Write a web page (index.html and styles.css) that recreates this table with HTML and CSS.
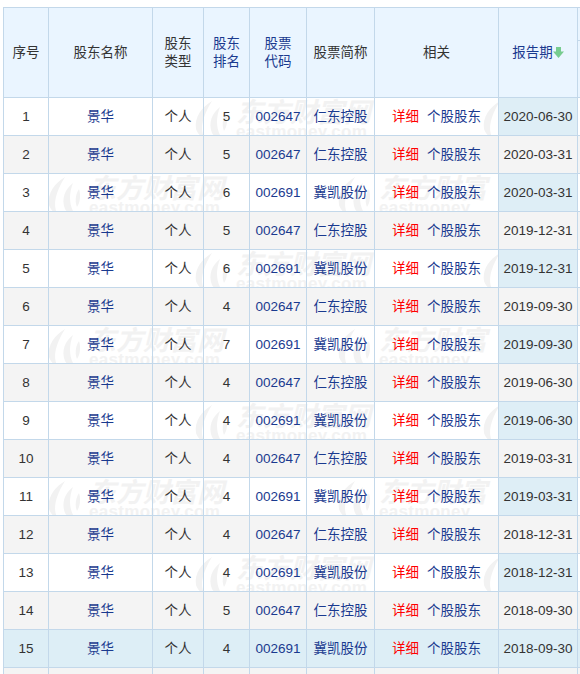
FILE: index.html
```html
<!DOCTYPE html>
<html lang="zh-CN">
<head>
<meta charset="utf-8">
<title>股东持股</title>
<link rel="stylesheet" href="styles.css">
</head>
<body>
<div class="page">
  <div class="wm-layer">
    <div class="wm" style="left:190px;top:99px"><svg class="wm-icon" viewBox="0 0 40 40"><path d="M22 2 C12 8 4 18 6 30 C8 36 12 38 14 38 C10 30 12 18 22 2 Z"/><path d="M30 8 C22 14 18 24 22 34 C24 38 28 38 30 36 C26 28 26 18 30 8 Z"/><path d="M36 14 C32 20 32 28 34 32 C37 28 38 20 36 14 Z"/></svg><div class="wm-text"><span class="wm-cn">东方财富网</span><span class="wm-en">eastmoney.com</span></div></div>
    <div class="wm" style="left:478px;top:99px"><svg class="wm-icon" viewBox="0 0 40 40"><path d="M22 2 C12 8 4 18 6 30 C8 36 12 38 14 38 C10 30 12 18 22 2 Z"/><path d="M30 8 C22 14 18 24 22 34 C24 38 28 38 30 36 C26 28 26 18 30 8 Z"/><path d="M36 14 C32 20 32 28 34 32 C37 28 38 20 36 14 Z"/></svg></div>
    <div class="wm" style="left:43px;top:175px"><svg class="wm-icon" viewBox="0 0 40 40"><path d="M22 2 C12 8 4 18 6 30 C8 36 12 38 14 38 C10 30 12 18 22 2 Z"/><path d="M30 8 C22 14 18 24 22 34 C24 38 28 38 30 36 C26 28 26 18 30 8 Z"/><path d="M36 14 C32 20 32 28 34 32 C37 28 38 20 36 14 Z"/></svg><div class="wm-text"><span class="wm-cn">东方财富网</span><span class="wm-en">eastmoney.com</span></div></div>
    <div class="wm" style="left:333px;top:175px"><svg class="wm-icon" viewBox="0 0 40 40"><path d="M22 2 C12 8 4 18 6 30 C8 36 12 38 14 38 C10 30 12 18 22 2 Z"/><path d="M30 8 C22 14 18 24 22 34 C24 38 28 38 30 36 C26 28 26 18 30 8 Z"/><path d="M36 14 C32 20 32 28 34 32 C37 28 38 20 36 14 Z"/></svg><div class="wm-text"><span class="wm-cn">东方财富</span><span class="wm-en">eastmoney</span></div></div>
    <div class="wm" style="left:190px;top:251px"><svg class="wm-icon" viewBox="0 0 40 40"><path d="M22 2 C12 8 4 18 6 30 C8 36 12 38 14 38 C10 30 12 18 22 2 Z"/><path d="M30 8 C22 14 18 24 22 34 C24 38 28 38 30 36 C26 28 26 18 30 8 Z"/><path d="M36 14 C32 20 32 28 34 32 C37 28 38 20 36 14 Z"/></svg><div class="wm-text"><span class="wm-cn">东方财富网</span><span class="wm-en">eastmoney.com</span></div></div>
    <div class="wm" style="left:478px;top:251px"><svg class="wm-icon" viewBox="0 0 40 40"><path d="M22 2 C12 8 4 18 6 30 C8 36 12 38 14 38 C10 30 12 18 22 2 Z"/><path d="M30 8 C22 14 18 24 22 34 C24 38 28 38 30 36 C26 28 26 18 30 8 Z"/><path d="M36 14 C32 20 32 28 34 32 C37 28 38 20 36 14 Z"/></svg></div>
    <div class="wm" style="left:43px;top:327px"><svg class="wm-icon" viewBox="0 0 40 40"><path d="M22 2 C12 8 4 18 6 30 C8 36 12 38 14 38 C10 30 12 18 22 2 Z"/><path d="M30 8 C22 14 18 24 22 34 C24 38 28 38 30 36 C26 28 26 18 30 8 Z"/><path d="M36 14 C32 20 32 28 34 32 C37 28 38 20 36 14 Z"/></svg><div class="wm-text"><span class="wm-cn">东方财富网</span><span class="wm-en">eastmoney.com</span></div></div>
    <div class="wm" style="left:333px;top:327px"><svg class="wm-icon" viewBox="0 0 40 40"><path d="M22 2 C12 8 4 18 6 30 C8 36 12 38 14 38 C10 30 12 18 22 2 Z"/><path d="M30 8 C22 14 18 24 22 34 C24 38 28 38 30 36 C26 28 26 18 30 8 Z"/><path d="M36 14 C32 20 32 28 34 32 C37 28 38 20 36 14 Z"/></svg><div class="wm-text"><span class="wm-cn">东方财富</span><span class="wm-en">eastmoney</span></div></div>
    <div class="wm" style="left:190px;top:403px"><svg class="wm-icon" viewBox="0 0 40 40"><path d="M22 2 C12 8 4 18 6 30 C8 36 12 38 14 38 C10 30 12 18 22 2 Z"/><path d="M30 8 C22 14 18 24 22 34 C24 38 28 38 30 36 C26 28 26 18 30 8 Z"/><path d="M36 14 C32 20 32 28 34 32 C37 28 38 20 36 14 Z"/></svg><div class="wm-text"><span class="wm-cn">东方财富网</span><span class="wm-en">eastmoney.com</span></div></div>
    <div class="wm" style="left:478px;top:403px"><svg class="wm-icon" viewBox="0 0 40 40"><path d="M22 2 C12 8 4 18 6 30 C8 36 12 38 14 38 C10 30 12 18 22 2 Z"/><path d="M30 8 C22 14 18 24 22 34 C24 38 28 38 30 36 C26 28 26 18 30 8 Z"/><path d="M36 14 C32 20 32 28 34 32 C37 28 38 20 36 14 Z"/></svg></div>
    <div class="wm" style="left:43px;top:479px"><svg class="wm-icon" viewBox="0 0 40 40"><path d="M22 2 C12 8 4 18 6 30 C8 36 12 38 14 38 C10 30 12 18 22 2 Z"/><path d="M30 8 C22 14 18 24 22 34 C24 38 28 38 30 36 C26 28 26 18 30 8 Z"/><path d="M36 14 C32 20 32 28 34 32 C37 28 38 20 36 14 Z"/></svg><div class="wm-text"><span class="wm-cn">东方财富网</span><span class="wm-en">eastmoney.com</span></div></div>
    <div class="wm" style="left:333px;top:479px"><svg class="wm-icon" viewBox="0 0 40 40"><path d="M22 2 C12 8 4 18 6 30 C8 36 12 38 14 38 C10 30 12 18 22 2 Z"/><path d="M30 8 C22 14 18 24 22 34 C24 38 28 38 30 36 C26 28 26 18 30 8 Z"/><path d="M36 14 C32 20 32 28 34 32 C37 28 38 20 36 14 Z"/></svg><div class="wm-text"><span class="wm-cn">东方财富</span><span class="wm-en">eastmoney</span></div></div>
    <div class="wm" style="left:190px;top:555px"><svg class="wm-icon" viewBox="0 0 40 40"><path d="M22 2 C12 8 4 18 6 30 C8 36 12 38 14 38 C10 30 12 18 22 2 Z"/><path d="M30 8 C22 14 18 24 22 34 C24 38 28 38 30 36 C26 28 26 18 30 8 Z"/><path d="M36 14 C32 20 32 28 34 32 C37 28 38 20 36 14 Z"/></svg><div class="wm-text"><span class="wm-cn">东方财富网</span><span class="wm-en">eastmoney.com</span></div></div>
    <div class="wm" style="left:478px;top:555px"><svg class="wm-icon" viewBox="0 0 40 40"><path d="M22 2 C12 8 4 18 6 30 C8 36 12 38 14 38 C10 30 12 18 22 2 Z"/><path d="M30 8 C22 14 18 24 22 34 C24 38 28 38 30 36 C26 28 26 18 30 8 Z"/><path d="M36 14 C32 20 32 28 34 32 C37 28 38 20 36 14 Z"/></svg></div>
  </div>

  <table class="grid">
    <colgroup>
      <col class="c-no"><col class="c-name"><col class="c-type"><col class="c-rank"><col class="c-code"><col class="c-abbr"><col class="c-rel"><col class="c-date"><col class="c-x"><col class="c-x">
    </colgroup>
    <thead>
      <tr class="h1">
        <th rowspan="2">序号</th>
        <th rowspan="2">股东名称</th>
        <th rowspan="2">股东<br>类型</th>
        <th rowspan="2" class="sortable">股东<br>排名</th>
        <th rowspan="2" class="sortable">股票<br>代码</th>
        <th rowspan="2">股票简称</th>
        <th rowspan="2">相关</th>
        <th rowspan="2" class="sortable sorted">报告期<svg class="sort-arrow" viewBox="0 0 11 11"><rect x="3" y="0" width="5" height="5"/><path d="M0 4.5 H11 L5.5 11 Z"/></svg></th>
        <th colspan="2"></th>
      </tr>
      <tr class="h2">
        <th></th><th></th>
      </tr>
    </thead>
    <tbody>
      <tr><td>1</td><td class="link">景华</td><td>个人</td><td>5</td><td class="link">002647</td><td class="link">仁东控股</td><td><span class="red">详细</span><span class="link">个股股东</span></td><td class="date">2020-06-30</td><td></td><td></td></tr>
      <tr><td>2</td><td class="link">景华</td><td>个人</td><td>5</td><td class="link">002647</td><td class="link">仁东控股</td><td><span class="red">详细</span><span class="link">个股股东</span></td><td class="date">2020-03-31</td><td></td><td></td></tr>
      <tr><td>3</td><td class="link">景华</td><td>个人</td><td>6</td><td class="link">002691</td><td class="link">冀凯股份</td><td><span class="red">详细</span><span class="link">个股股东</span></td><td class="date">2020-03-31</td><td></td><td></td></tr>
      <tr><td>4</td><td class="link">景华</td><td>个人</td><td>5</td><td class="link">002647</td><td class="link">仁东控股</td><td><span class="red">详细</span><span class="link">个股股东</span></td><td class="date">2019-12-31</td><td></td><td></td></tr>
      <tr><td>5</td><td class="link">景华</td><td>个人</td><td>6</td><td class="link">002691</td><td class="link">冀凯股份</td><td><span class="red">详细</span><span class="link">个股股东</span></td><td class="date">2019-12-31</td><td></td><td></td></tr>
      <tr><td>6</td><td class="link">景华</td><td>个人</td><td>4</td><td class="link">002647</td><td class="link">仁东控股</td><td><span class="red">详细</span><span class="link">个股股东</span></td><td class="date">2019-09-30</td><td></td><td></td></tr>
      <tr><td>7</td><td class="link">景华</td><td>个人</td><td>7</td><td class="link">002691</td><td class="link">冀凯股份</td><td><span class="red">详细</span><span class="link">个股股东</span></td><td class="date">2019-09-30</td><td></td><td></td></tr>
      <tr><td>8</td><td class="link">景华</td><td>个人</td><td>4</td><td class="link">002647</td><td class="link">仁东控股</td><td><span class="red">详细</span><span class="link">个股股东</span></td><td class="date">2019-06-30</td><td></td><td></td></tr>
      <tr><td>9</td><td class="link">景华</td><td>个人</td><td>4</td><td class="link">002691</td><td class="link">冀凯股份</td><td><span class="red">详细</span><span class="link">个股股东</span></td><td class="date">2019-06-30</td><td></td><td></td></tr>
      <tr><td>10</td><td class="link">景华</td><td>个人</td><td>4</td><td class="link">002647</td><td class="link">仁东控股</td><td><span class="red">详细</span><span class="link">个股股东</span></td><td class="date">2019-03-31</td><td></td><td></td></tr>
      <tr><td>11</td><td class="link">景华</td><td>个人</td><td>4</td><td class="link">002691</td><td class="link">冀凯股份</td><td><span class="red">详细</span><span class="link">个股股东</span></td><td class="date">2019-03-31</td><td></td><td></td></tr>
      <tr><td>12</td><td class="link">景华</td><td>个人</td><td>4</td><td class="link">002647</td><td class="link">仁东控股</td><td><span class="red">详细</span><span class="link">个股股东</span></td><td class="date">2018-12-31</td><td></td><td></td></tr>
      <tr><td>13</td><td class="link">景华</td><td>个人</td><td>4</td><td class="link">002691</td><td class="link">冀凯股份</td><td><span class="red">详细</span><span class="link">个股股东</span></td><td class="date">2018-12-31</td><td></td><td></td></tr>
      <tr><td>14</td><td class="link">景华</td><td>个人</td><td>5</td><td class="link">002647</td><td class="link">仁东控股</td><td><span class="red">详细</span><span class="link">个股股东</span></td><td class="date">2018-09-30</td><td></td><td></td></tr>
      <tr class="hover"><td>15</td><td class="link">景华</td><td>个人</td><td>4</td><td class="link">002691</td><td class="link">冀凯股份</td><td><span class="red">详细</span><span class="link">个股股东</span></td><td class="date">2018-09-30</td><td></td><td></td></tr>
      <tr><td></td><td></td><td></td><td></td><td></td><td></td><td></td><td class="date"></td><td></td><td></td></tr>
    </tbody>
  </table>
</div>
</body>
</html>
```

FILE: styles.css
```css
html, body {
  margin: 0;
  padding: 0;
  background: #fff;
  overflow: hidden;
}

.page {
  position: relative;
  width: 580px;
  height: 674px;
  overflow: hidden;
  padding: 7px 0 0 3px;
  box-sizing: border-box;
  font-family: "Liberation Sans", "Noto Sans CJK SC", sans-serif;
  font-size: 13.5px;
  color: #333;
}

.wm-layer {
  position: absolute;
  left: 0;
  top: 0;
  width: 100%;
  height: 100%;
  z-index: 0;
}

.wm {
  position: absolute;
  display: flex;
  align-items: flex-start;
  gap: 6px;
  color: #f2f2f2;
}

.wm-icon {
  width: 40px;
  height: 40px;
  fill: #f2f2f2;
}

.wm-text {
  display: flex;
  flex-direction: column;
}

.wm-cn {
  font-family: "Noto Sans CJK SC", sans-serif;
  font-weight: 700;
  font-style: italic;
  font-size: 27px;
  line-height: 24px;
}

.wm-en {
  font-family: "Liberation Sans", sans-serif;
  font-weight: bold;
  font-size: 17px;
  line-height: 18px;
  letter-spacing: 0.3px;
}

.grid {
  position: relative;
  z-index: 1;
  border-collapse: collapse;
  table-layout: fixed;
  width: 754px;
}

.c-no { width: 45px; }
.c-name { width: 104px; }
.c-type { width: 51px; }
.c-rank { width: 46px; }
.c-code { width: 57px; }
.c-abbr { width: 68px; }
.c-rel { width: 124px; }
.c-date { width: 79px; }
.c-x { width: 90px; }

.grid th,
.grid td {
  border: 1px solid #c3d8ea;
  padding: 0;
  text-align: center;
  vertical-align: middle;
  white-space: nowrap;
}

.grid th {
  background: #eaf5ff;
  font-weight: normal;
  line-height: 18px;
  color: #333;
}

.grid .h1 th { height: 32px; }
.grid .h2 th { height: 56px; }

.grid th.sortable { color: #1a3a8f; }

.sort-arrow {
  width: 11px;
  height: 11px;
  fill: #77cc8f;
  vertical-align: -1px;
}

.grid td {
  height: 37px;
  line-height: 18px;
}

.grid tbody tr:nth-child(even) td { background: #f4f4f4; }
.grid tbody td.date { background: #deeef6; color: #333; }
.grid tbody tr.hover td { background: #ddeef6; }

.link { color: #1a3a8f; }
.red { color: #ff0000; margin-right: 8px; }
```
